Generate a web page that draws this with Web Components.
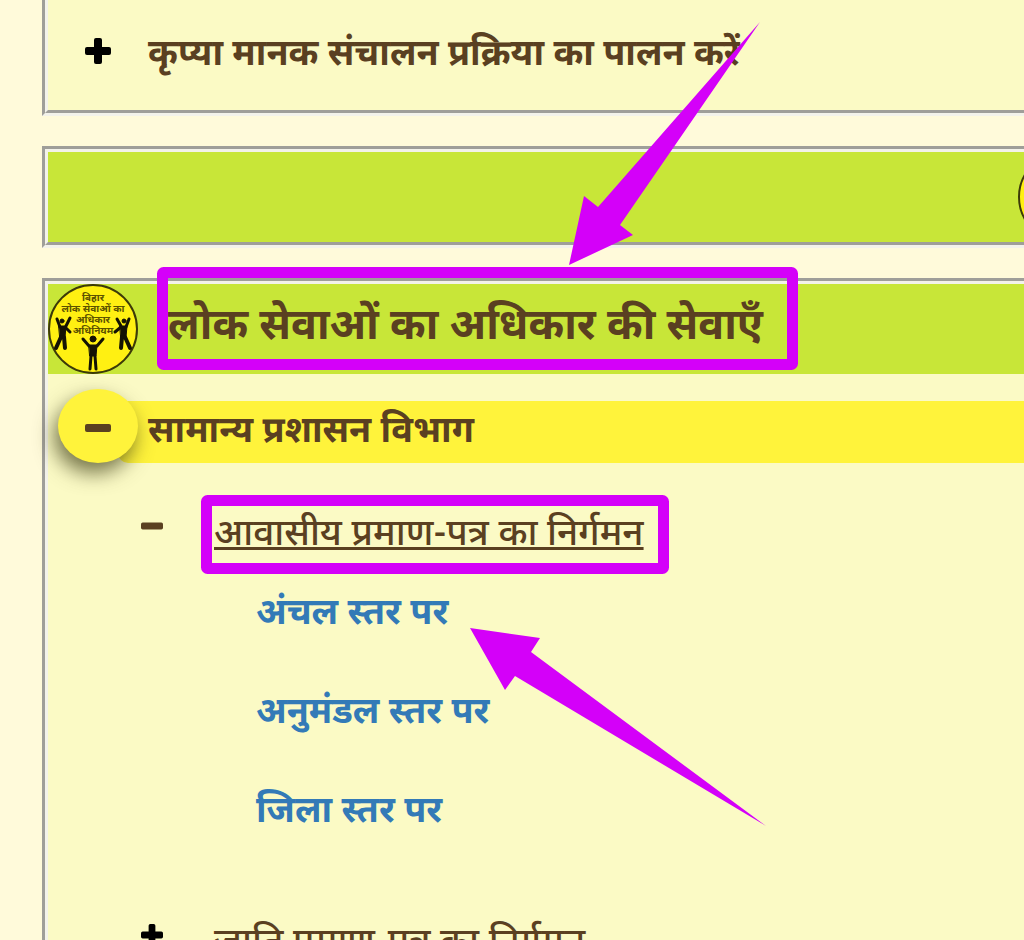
<!DOCTYPE html>
<html lang="hi">
<head>
  <meta charset="utf-8">
  <title>लोक सेवाओं का अधिकार</title>
  <style>
    html, body {
      margin: 0;
      background: #fffada;
    }
    body {
      position: relative;
      overflow: hidden;
      height: 100vh;
      color: #5a4021;
      font-family: "Noto Sans Devanagari", "Noto Sans", sans-serif;
    }
    main {
      display: flex;
      flex-direction: column;
      gap: 30px;
      padding-left: 42px;
    }
  </style>
</head>
<body>
  <main>
    <service-panel class="first">
      <service-row>कृप्या मानक संचालन प्रक्रिया का पालन करें</service-row>
    </service-panel>

    <service-panel>
      <panel-header class="centered" slot="header"><act-logo></act-logo></panel-header>
    </service-panel>

    <service-panel class="open">
      <panel-header slot="header">
        <act-logo slot="logo"></act-logo>
        लोक सेवाओं का अधिकार की सेवाएँ
      </panel-header>
      <service-row class="active" open>सामान्य प्रशासन विभाग</service-row>
      <service-group>
        <sub-row open>आवासीय प्रमाण-पत्र का निर्गमन</sub-row>
        <level-link href="#anchal">अंचल स्तर पर</level-link>
        <level-link href="#anumandal">अनुमंडल स्तर पर</level-link>
        <level-link href="#jila">जिला स्तर पर</level-link>
        <sub-row class="next">जाति प्रमाण-पत्र का निर्गमन</sub-row>
      </service-group>
    </service-panel>
  </main>
  <guide-marks></guide-marks>

  <script>
    function attach(el, html) {
      el.attachShadow({ mode: 'open' }).innerHTML = html;
    }

    function toggleIcon(open, size) {
      let bar = '<rect x="0" y="9" width="26" height="8" rx="2"/>';
      let post = '<rect x="9" y="0" width="8" height="26" rx="2"/>';
      return `<svg width="${size}" height="${size}" viewBox="0 0 26 26" aria-hidden="true" fill="${open ? '#5a4021' : '#000'}">${bar}${open ? '' : post}</svg>`;
    }

    class ServicePanel extends HTMLElement {
      constructor() {
        super();
        attach(this, `
          <style>
            :host {
              display: block;
              border: 6px groove #f3f2ea;
              border-right: 0;
              background: #fbfac5;
            }
            :host(.first) {
              border-top: 0;
              padding: 12px 0 24px;
            }
            :host(.open) {
              padding-bottom: 40px;
            }
          </style>
          <slot name="header"></slot>
          <slot></slot>`);
      }
    }
    window.customElements.define('service-panel', ServicePanel);

    class PanelHeader extends HTMLElement {
      constructor() {
        super();
        attach(this, `
          <style>
            :host {
              display: flex;
              gap: 30px;
              height: 90px;
              overflow: hidden;
              background: #c8e638;
            }
            :host(.centered) {
              justify-content: flex-end;
            }
            :host(.centered) ::slotted(act-logo) {
              margin-right: -84px;
            }
            h2 {
              margin: 0;
              font-size: 43px;
              font-weight: 700;
              line-height: 90px;
              white-space: nowrap;
            }
            ::slotted(act-logo) {
              flex: none;
            }
          </style>
          <slot name="logo"></slot>
          <h2><slot></slot></h2>`);
      }
    }
    window.customElements.define('panel-header', PanelHeader);

    class ActLogo extends HTMLElement {
      constructor() {
        super();
        attach(this, `
          <style>
            :host { display: block; width: 90px; height: 90px; }
            svg { display: block; }
            text { font-weight: 700; font-size: 10px; text-anchor: middle; fill: #5c5200; }
          </style>
          <svg width="90" height="90" viewBox="0 0 90 90">
            <circle cx="45" cy="45" r="44" fill="#fff012" stroke="#3c3a08" stroke-width="2"/>
            <text x="45" y="17">बिहार</text>
            <text x="45" y="28">लोक सेवाओं का</text>
            <text x="45" y="39">अधिकार</text>
            <text x="45" y="50">अधिनियम</text>
            <g fill="#141204" stroke="#141204" stroke-linecap="round" stroke-linejoin="round">
              <circle cx="14" cy="37" r="2"/>
              <path d="M11 42h7l-1 11h-5z"/>
              <path fill="none" stroke-width="3" d="M17 43l5 5M12 43l-3-8M18 42l4-8"/>
              <path fill="none" stroke-width="4" d="M13 53l-5 11M16 53l1 11"/>
              <circle cx="76" cy="37" r="2"/>
              <path d="M72 42h7l-1 11h-5z"/>
              <path fill="none" stroke-width="3" d="M73 43l-6 5M78 43l3-8M73 42l-4-7"/>
              <path fill="none" stroke-width="4" d="M74 53l-1 11M77 53l5 11"/>
              <circle cx="45" cy="55" r="3"/>
              <path d="M41 61h8l-1 11h-6z"/>
              <path fill="none" stroke-width="3" d="M41 62l-6-7M49 62l6-7M43 72l-1 13M47 72l1 13"/>
            </g>
          </svg>`);
      }
    }
    window.customElements.define('act-logo', ActLogo);

    class ServiceRow extends HTMLElement {
      constructor() {
        super();
        let open = this.hasAttribute('open');
        attach(this, `
          <style>
            :host {
              display: flex;
              align-items: flex-end;
              padding-left: 10px;
            }
            :host(.active) {
              padding-top: 15px;
            }
            button {
              position: relative;
              flex: none;
              display: flex;
              align-items: center;
              justify-content: center;
              width: 80px;
              height: 74px;
              padding: 3px 0 0;
              border: 0;
              border-radius: 50%;
              background: none;
            }
            label {
              flex: 1;
              margin-left: -20px;
              padding: 4px 0 0 30px;
              font-size: 36px;
              font-weight: 700;
              line-height: 58px;
              white-space: nowrap;
            }
            :host(.active) button {
              background: #fff33b;
              box-shadow: -4px 10px 20px rgba(60, 60, 20, .7);
            }
            :host(.active) label {
              border-radius: 10px 0 0 10px;
              background: #fff33b;
            }
          </style>
          <button id="toggle" type="button" aria-expanded="${open}">${toggleIcon(open, 26)}</button>
          <label for="toggle"><slot></slot></label>`);
      }
    }
    window.customElements.define('service-row', ServiceRow);

    class ServiceGroup extends HTMLElement {
      constructor() {
        super();
        attach(this, `
          <style>
            :host { display: block; padding: 33px 0 0 64px; }
          </style>
          <slot></slot>`);
      }
    }
    window.customElements.define('service-group', ServiceGroup);

    class SubRow extends HTMLElement {
      constructor() {
        super();
        let open = this.hasAttribute('open');
        attach(this, `
          <style>
            :host {
              display: flex;
              align-items: center;
              height: 68px;
            }
            :host(.next) {
              padding-top: 44px;
            }
            button {
              flex: none;
              display: flex;
              justify-content: center;
              width: 80px;
              padding: 0 0 8px;
              border: 0;
              background: none;
            }
            label {
              padding: 12px 0 0 22px;
              font-size: 37px;
              font-weight: 500;
              line-height: 68px;
              white-space: nowrap;
            }
            :host([open]) label {
              text-decoration: underline;
              text-decoration-thickness: 3px;
              text-decoration-skip-ink: none;
            }
          </style>
          <button id="toggle" type="button" aria-expanded="${open}">${toggleIcon(open, 22)}</button>
          <label for="toggle"><slot></slot></label>`);
      }
    }
    window.customElements.define('sub-row', SubRow);

    class LevelLink extends HTMLElement {
      constructor() {
        super();
        attach(this, `
          <style>
            :host {
              display: block;
              padding: 5px 0 0 144px;
              font-size: 36px;
              font-weight: 700;
              line-height: 94px;
              white-space: nowrap;
            }
            a {
              color: #337ab7;
              text-decoration: none;
            }
          </style>
          <a href="${this.getAttribute('href')}"><slot></slot></a>`);
      }
    }
    window.customElements.define('level-link', LevelLink);

    // boxes and arrows drawn over the page
    class GuideMarks extends HTMLElement {
      constructor() {
        super();
        attach(this, `
          <style>
            :host {
              position: absolute;
              inset: 0;
              z-index: 2;
              overflow: hidden;
              pointer-events: none;
            }
            svg { display: block; width: 100%; height: 100%; }
          </style>
          <svg aria-hidden="true">
            <g fill="none" stroke="#d400f9" stroke-width="11">
              <rect x="162.5" y="272.5" width="630" height="92" rx="1"/>
              <rect x="206.5" y="500.5" width="457" height="68" rx="1"/>
            </g>
            <g fill="#d400f9">
              <path d="M569 265L584 196L598 207L760 22L620 225L633 235Z"/>
              <path d="M470 628L540 638L531 652L766 826L515 676L505 690Z"/>
            </g>
          </svg>`);
      }
    }
    window.customElements.define('guide-marks', GuideMarks);
  </script>
</body>
</html>
